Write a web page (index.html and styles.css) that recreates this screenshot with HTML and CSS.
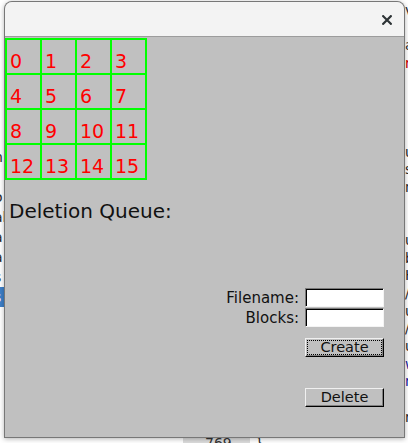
FILE: index.html
```html
<!DOCTYPE html>
<html>
<head>
<meta charset="utf-8">
<link rel="stylesheet" href="styles.css">
</head>
<body>
<div class="desktop">
  <div class="panes">
    <div class="pane-left">
      <div class="ln">t</div>
      <div class="ln"></div>
      <div class="ln">(</div>
      <div class="ln"></div>
      <div class="ln">t</div>
      <div class="ln"></div>
      <div class="ln">n</div>
      <div class="ln"></div>
      <div class="ln">o</div>
      <div class="ln">al</div>
      <div class="ln">a</div>
      <div class="ln">a</div>
      <div class="ln">s</div>
      <div class="ln sel">s</div>
    </div>
    <div class="pane-right">
      <div class="ln">v</div>
      <div class="ln"></div>
      <div class="ln">a</div>
      <div class="ln red">r</div>
      <div class="ln"></div>
      <div class="ln"></div>
      <div class="ln"></div>
      <div class="ln"></div>
      <div class="ln">u</div>
      <div class="ln">s</div>
      <div class="ln">n</div>
      <div class="ln"></div>
      <div class="ln"></div>
      <div class="ln">u</div>
      <div class="ln">b</div>
      <div class="ln">H</div>
      <div class="ln">/</div>
      <div class="ln">u</div>
      <div class="ln">/</div>
      <div class="ln">u</div>
      <div class="ln blue">w</div>
      <div class="ln blue">m</div>
      <div class="ln"></div>
      <div class="ln">r</div>
    </div>
  </div>
  <div class="bottom-row">
    <div class="gutter">769</div>
    <span class="brace">}</span>
  </div>
</div>

<div class="window">
  <div class="titlebar">
    <svg class="close" width="10" height="10" viewBox="0 0 10 10">
      <path d="M1.2 1.2 L8.8 8.8 M8.8 1.2 L1.2 8.8" stroke="#2e3436" stroke-width="2.2" stroke-linecap="square" fill="none"/>
    </svg>
  </div>
  <div class="content">
    <div class="grid">
      <div class="cell">0</div><div class="cell">1</div><div class="cell">2</div><div class="cell">3</div>
      <div class="cell">4</div><div class="cell">5</div><div class="cell">6</div><div class="cell">7</div>
      <div class="cell">8</div><div class="cell">9</div><div class="cell">10</div><div class="cell">11</div>
      <div class="cell">12</div><div class="cell">13</div><div class="cell">14</div><div class="cell">15</div>
    </div>
    <div class="queue-title">Deletion Queue:</div>
    <div class="form">
      <div class="row"><label class="lbl">Filename:</label><input class="field" type="text"></div>
      <div class="row"><label class="lbl">Blocks:</label><input class="field" type="text"></div>
      <button class="btn btn-create"><span class="btn-inner focus">Create</span></button>
      <button class="btn btn-delete"><span class="btn-inner">Delete</span></button>
    </div>
  </div>
</div>
</body>
</html>
```

FILE: styles.css
```css
html, body {
  margin: 0;
  padding: 0;
  width: 408px;
  height: 443px;
  overflow: hidden;
  background: #ffffff;
}

.desktop {
  width: 408px;
  height: 443px;
  display: flex;
  flex-direction: column;
  font-family: "DejaVu Sans", sans-serif;
  font-size: 14px;
  color: #2a2a2a;
}

.panes {
  height: 435px;
  display: flex;
  justify-content: space-between;
}

.pane-left {
  width: 4px;
  padding-top: 27px;
}

.pane-left .ln {
  height: 20px;
  line-height: 20px;
  margin-left: -6px;
  padding-left: 0;
  white-space: nowrap;
}

.pane-left .ln.sel {
  margin-left: 0;
  padding-left: 0;
  text-indent: -6px;
  background: #3d7fc8;
  color: #ffffff;
  width: 4px;
  overflow: hidden;
}

.pane-right {
  width: 3px;
  padding-top: 2px;
}

.pane-right .ln {
  height: 17.7px;
  line-height: 17.7px;
  white-space: nowrap;
}

.pane-right .red { color: #cc0000; }
.pane-right .blue { color: #1a1aa0; }

.bottom-row {
  display: flex;
  align-items: flex-start;
  padding-left: 183px;
  height: 8px;
}

.gutter {
  width: 67px;
  height: 17px;
  line-height: 17px;
  background: #dcdcdc;
  padding-left: 22px;
  box-sizing: border-box;
  color: #333;
}

.brace {
  margin-left: 5px;
  line-height: 17px;
}

.window {
  position: absolute;
  left: 4px;
  top: 1px;
  width: 401px;
  height: 437px;
  box-sizing: border-box;
  border: 1px solid rgba(0, 0, 0, 0.38);
  border-radius: 8px 8px 0 0;
  overflow: hidden;
  background: #c0c0c0;
  box-shadow: 0 1px 5px rgba(0, 0, 0, 0.3);
  display: flex;
  flex-direction: column;
}

.titlebar {
  height: 34px;
  flex: none;
  background: #f3f3f3;
  border-bottom: 1px solid #9c9c9c;
  display: flex;
  align-items: center;
  justify-content: flex-end;
  padding-right: 12px;
}

.close {
  display: block;
  margin-top: 1px;
}

.content {
  flex: 1;
  background: #c0c0c0;
  padding-top: 1px;
  display: flex;
  flex-direction: column;
  font-family: "DejaVu Sans", sans-serif;
}

.grid {
  align-self: flex-start;
  display: grid;
  grid-template-columns: repeat(4, 33px);
  grid-auto-rows: 33px;
  gap: 2px;
  padding: 2px;
  background: #00ff00;
}

.cell {
  background: #c0c0c0;
  color: #ff0000;
  font-size: 19px;
  line-height: 19px;
  padding-top: 12px;
  padding-left: 3px;
  box-sizing: border-box;
  white-space: nowrap;
}

.queue-title {
  margin-top: 20px;
  padding-left: 4px;
  font-size: 20px;
  line-height: 23px;
  color: #111111;
}

.form {
  margin-top: 65px;
  padding-right: 20px;
  display: flex;
  flex-direction: column;
  align-items: flex-end;
}

.row {
  display: flex;
  align-items: flex-start;
  gap: 6px;
  height: 19px;
  margin-bottom: 1px;
}

.lbl {
  font-size: 15px;
  line-height: 21px;
  color: #111111;
  white-space: nowrap;
}

.field {
  width: 79px;
  height: 19px;
  box-sizing: border-box;
  margin: 0;
  padding: 0;
  background: #ffffff;
  border: 1px solid;
  border-color: #7a7a7a #f4f4f4 #f4f4f4 #7a7a7a;
  box-shadow: inset 1px 1px 0 #000000;
  outline: none;
  -webkit-appearance: none;
  appearance: none;
}

.btn {
  -webkit-appearance: none;
  appearance: none;
  width: 79px;
  height: 19px;
  box-sizing: border-box;
  margin: 0;
  padding: 0;
  background: #c0c0c0;
  border: 1px solid;
  border-color: #f0f0f0 #000000 #000000 #f0f0f0;
  box-shadow: inset -1px -1px 0 #808080;
  font-family: "DejaVu Sans", sans-serif;
  font-size: 14.5px;
  color: #111111;
  display: block;
}

.btn-create {
  margin-top: 10px;
}

.btn-delete {
  margin-top: 31px;
}

.btn-inner {
  display: block;
  margin: 1px;
  height: 15px;
  box-sizing: border-box;
  border: 1px solid transparent;
  line-height: 13px;
  text-align: center;
}

.btn-inner.focus {
  border: 1px dotted #000000;
}
```
